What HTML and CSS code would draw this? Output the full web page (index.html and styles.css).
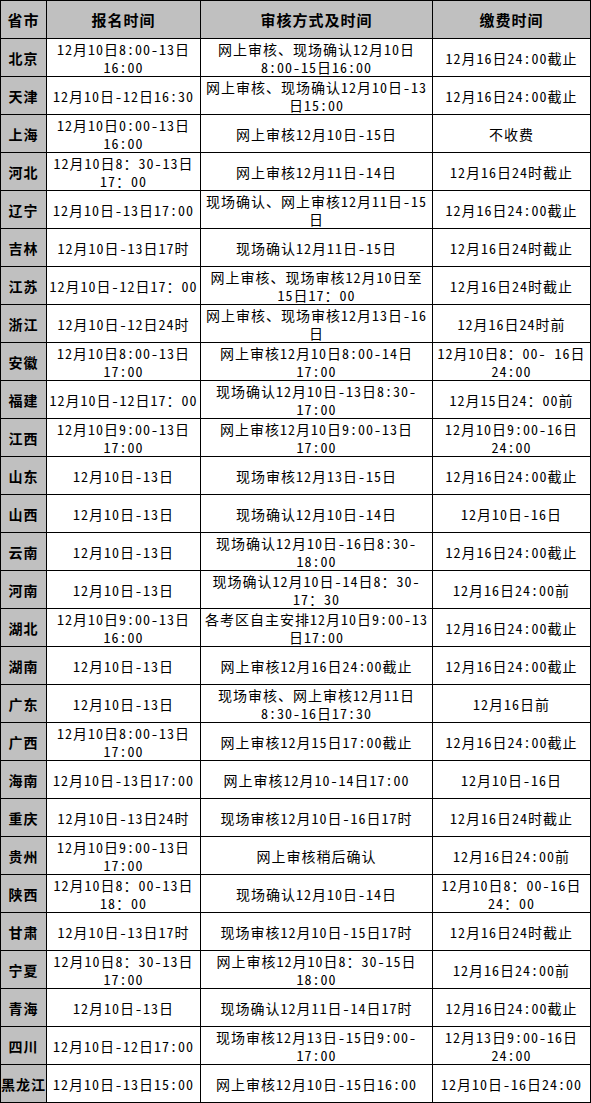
FILE: index.html
```html
<!DOCTYPE html>
<html lang="zh-CN">
<head>
<meta charset="utf-8">
<title>报名时间表</title>
<link rel="stylesheet" href="styles.css">
</head>
<body>
<table class="sheet">
  <colgroup>
    <col class="c-prov">
    <col class="c-reg">
    <col class="c-audit">
    <col class="c-fee">
  </colgroup>
  <thead>
    <tr><th class="hd">省市</th><th class="hd">报名时间</th><th class="hd">审核方式及时间</th><th class="hd">缴费时间</th></tr>
  </thead>
  <tbody>
    <tr><th class="prov">北京</th><td>12月10日8:00-13日<br>16:00</td><td>网上审核、现场确认12月10日<br>8:00-15日16:00</td><td>12月16日24:00截止</td></tr>
    <tr><th class="prov">天津</th><td>12月10日-12日16:30</td><td>网上审核、现场确认12月10日-13<br>日15:00</td><td>12月16日24:00截止</td></tr>
    <tr><th class="prov">上海</th><td>12月10日0:00-13日<br>16:00</td><td>网上审核12月10日-15日</td><td>不收费</td></tr>
    <tr><th class="prov">河北</th><td>12月10日8：30-13日<br>17：00</td><td>网上审核12月11日-14日</td><td>12月16日24时截止</td></tr>
    <tr><th class="prov">辽宁</th><td>12月10日-13日17:00</td><td>现场确认、网上审核12月11日-15<br>日</td><td>12月16日24:00截止</td></tr>
    <tr><th class="prov">吉林</th><td>12月10日-13日17时</td><td>现场确认12月11日-15日</td><td>12月16日24时截止</td></tr>
    <tr><th class="prov">江苏</th><td>12月10日-12日17：00</td><td>网上审核、现场审核12月10日至<br>15日17：00</td><td>12月16日24时截止</td></tr>
    <tr><th class="prov">浙江</th><td>12月10日-12日24时</td><td>网上审核、现场审核12月13日-16<br>日</td><td>12月16日24时前</td></tr>
    <tr><th class="prov">安徽</th><td>12月10日8:00-13日<br>17:00</td><td>网上审核12月10日8:00-14日<br>17:00</td><td>12月10日8：00- 16日<br>24:00</td></tr>
    <tr><th class="prov">福建</th><td>12月10日-12日17：00</td><td>现场确认12月10日-13日8:30-<br>17:00</td><td>12月15日24：00前</td></tr>
    <tr><th class="prov">江西</th><td>12月10日9:00-13日<br>17:00</td><td>网上审核12月10日9:00-13日<br>17:00</td><td>12月10日9:00-16日<br>24:00</td></tr>
    <tr><th class="prov">山东</th><td>12月10日-13日</td><td>现场审核12月13日-15日</td><td>12月16日24:00截止</td></tr>
    <tr><th class="prov">山西</th><td>12月10日-13日</td><td>现场确认12月10日-14日</td><td>12月10日-16日</td></tr>
    <tr><th class="prov">云南</th><td>12月10日-13日</td><td>现场确认12月10日-16日8:30-<br>18:00</td><td>12月16日24:00截止</td></tr>
    <tr><th class="prov">河南</th><td>12月10日-13日</td><td>现场确认12月10日-14日8：30-<br>17：30</td><td>12月16日24:00前</td></tr>
    <tr><th class="prov">湖北</th><td>12月10日9:00-13日<br>16:00</td><td>各考区自主安排12月10日9:00-13<br>日17:00</td><td>12月16日24:00截止</td></tr>
    <tr><th class="prov">湖南</th><td>12月10日-13日</td><td>网上审核12月16日24:00截止</td><td>12月16日24:00截止</td></tr>
    <tr><th class="prov">广东</th><td>12月10日-13日</td><td>现场审核、网上审核12月11日<br>8:30-16日17:30</td><td>12月16日前</td></tr>
    <tr><th class="prov">广西</th><td>12月10日8:00-13日<br>17:00</td><td>网上审核12月15日17:00截止</td><td>12月16日24:00截止</td></tr>
    <tr><th class="prov">海南</th><td>12月10日-13日17:00</td><td>网上审核12月10-14日17:00</td><td>12月10日-16日</td></tr>
    <tr><th class="prov">重庆</th><td>12月10日-13日24时</td><td>现场审核12月10日-16日17时</td><td>12月16日24时截止</td></tr>
    <tr><th class="prov">贵州</th><td>12月10日9:00-13日<br>17:00</td><td>网上审核稍后确认</td><td>12月16日24:00前</td></tr>
    <tr><th class="prov">陕西</th><td>12月10日8：00-13日<br>18：00</td><td>现场确认12月10日-14日</td><td>12月10日8：00-16日<br>24：00</td></tr>
    <tr><th class="prov">甘肃</th><td>12月10日-13日17时</td><td>现场审核12月10日-15日17时</td><td>12月16日24时截止</td></tr>
    <tr><th class="prov">宁夏</th><td>12月10日8：30-13日<br>17:00</td><td>网上审核12月10日8：30-15日<br>18:00</td><td>12月16日24:00前</td></tr>
    <tr><th class="prov">青海</th><td>12月10日-13日</td><td>现场确认12月11日-14日17时</td><td>12月16日24:00截止</td></tr>
    <tr><th class="prov">四川</th><td>12月10日-12日17:00</td><td>现场审核12月13日-15日9:00-<br>17:00</td><td>12月13日9:00-16日<br>24:00</td></tr>
    <tr><th class="prov">黑龙江</th><td>12月10日-13日15:00</td><td>网上审核12月10日-15日16:00</td><td>12月10日-16日24:00</td></tr>
  </tbody>
</table>
</body>
</html>
```

FILE: styles.css
```css
html, body {
  margin: 0;
  padding: 0;
  background: #ffffff;
}

.sheet {
  border-collapse: collapse;
  table-layout: fixed;
  width: 591px;
  font-family: "Noto Sans CJK SC", "Noto Sans CJK JP", sans-serif;
  font-size: 14px;
  letter-spacing: 1px;
  font-feature-settings: "hwid" 1;
  color: #000000;
}

.c-prov { width: 46px; }
.c-reg { width: 154px; }
.c-audit { width: 232px; }
.c-fee { width: 158px; }

.sheet tr {
  height: 38px;
}

.sheet th,
.sheet td {
  border: 1px solid #000000;
  padding: 0;
  text-align: center;
  vertical-align: middle;
  white-space: nowrap;
  line-height: 18px;
  overflow: visible;
}

.sheet td {
  font-weight: normal;
}

.hd {
  background: #c0c0c0;
  font-size: 15px;
  letter-spacing: 1px;
  font-weight: bold;
}

.prov {
  background: #c0c0c0;
  font-size: 14px;
  letter-spacing: 1px;
  font-weight: bold;
}
```
